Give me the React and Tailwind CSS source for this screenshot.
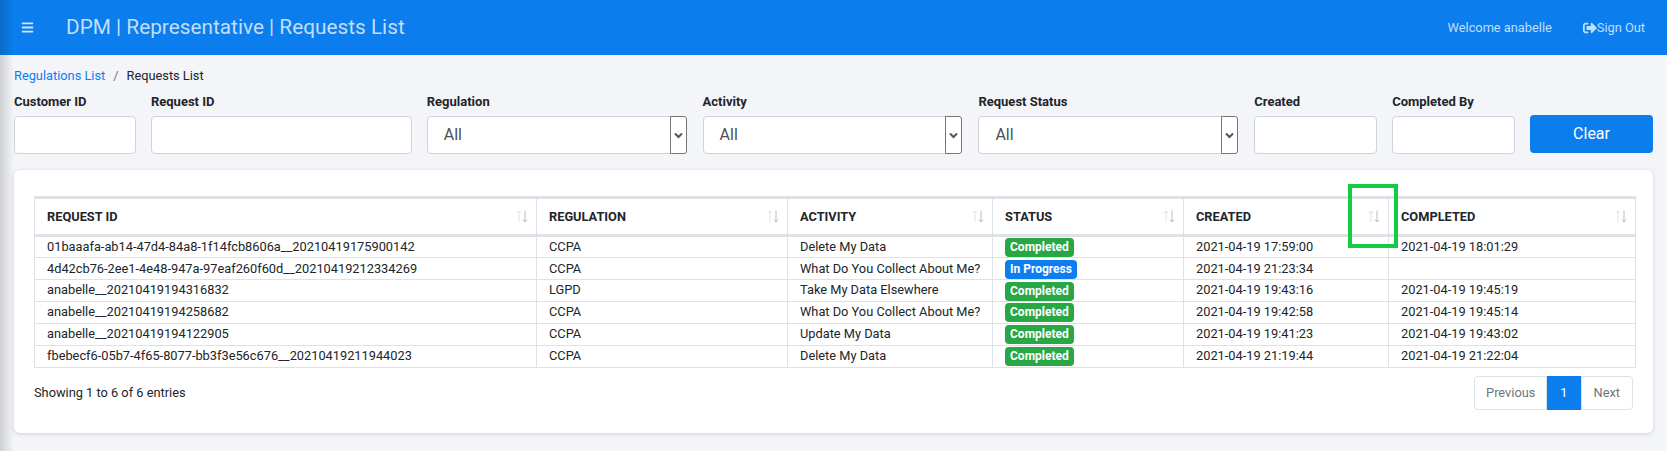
import React from 'react';
import { FaBars, FaSignOutAlt } from 'react-icons/fa';

const rows = [
  { id: '01baaafa-ab14-47d4-84a8-1f14fcb8606a__20210419175900142', reg: 'CCPA', activity: 'Delete My Data', status: 'Completed', created: '2021-04-19 17:59:00', completed: '2021-04-19 18:01:29' },
  { id: '4d42cb76-2ee1-4e48-947a-97eaf260f60d__20210419212334269', reg: 'CCPA', activity: 'What Do You Collect About Me?', status: 'In Progress', created: '2021-04-19 21:23:34', completed: '' },
  { id: 'anabelle__20210419194316832', reg: 'LGPD', activity: 'Take My Data Elsewhere', status: 'Completed', created: '2021-04-19 19:43:16', completed: '2021-04-19 19:45:19' },
  { id: 'anabelle__20210419194258682', reg: 'CCPA', activity: 'What Do You Collect About Me?', status: 'Completed', created: '2021-04-19 19:42:58', completed: '2021-04-19 19:45:14' },
  { id: 'anabelle__20210419194122905', reg: 'CCPA', activity: 'Update My Data', status: 'Completed', created: '2021-04-19 19:41:23', completed: '2021-04-19 19:43:02' },
  { id: 'fbebecf6-05b7-4f65-8077-bb3f3e56c676__20210419211944023', reg: 'CCPA', activity: 'Delete My Data', status: 'Completed', created: '2021-04-19 21:19:44', completed: '2021-04-19 21:22:04' },
];

const columns = [
  { label: 'REQUEST ID', width: 'w-[502px]' },
  { label: 'REGULATION', width: 'w-[251px]' },
  { label: 'ACTIVITY', width: 'w-[205px]' },
  { label: 'STATUS', width: 'w-[191px]' },
  { label: 'CREATED', width: 'w-[205px]' },
  { label: 'COMPLETED', width: 'w-[247px]' },
];

function SortArrows() {
  return (
    <svg width="12" height="13" viewBox="0 0 12 13" className="shrink-0" fill="none">
      <path d="M3 12.5V1M.8 3.4 3 1l2.2 2.4" stroke="#dde3ea" strokeWidth="1" />
      <path d="M9 .5V12M6.8 9.6 9 12l2.2-2.4" stroke="#b5bcc5" strokeWidth="1" />
    </svg>
  );
}

function Label({ children }) {
  return <label className="block h-[19px] text-[13px] leading-[19px] font-bold text-[#212529] mb-[5px]">{children}</label>;
}

function TextFilter({ label, width }) {
  return (
    <div className={width}>
      <Label>{label}</Label>
      <input className="block w-full h-[38px] bg-white border border-[#ced4da] rounded-[4px]" />
    </div>
  );
}

function SelectFilter({ label }) {
  return (
    <div className="w-[260px] mr-px">
      <Label>{label}</Label>
      <div className="flex items-stretch h-[38px] bg-white border border-[#ced4da] rounded-[4px]">
        <div className="flex-1 pl-[16px] text-[16px] leading-[36px] text-[#495057]">All</div>
        <div className="flex items-center justify-center w-[17px] border border-[#767676] rounded-r-[3px] -my-px -mr-px bg-white">
          <svg width="9" height="7" viewBox="0 0 9 7" fill="none">
            <path d="M1 1.5 4.5 5 8 1.5" stroke="#555" strokeWidth="2" />
          </svg>
        </div>
      </div>
    </div>
  );
}

function Badge({ status }) {
  const color = status === 'Completed' ? 'bg-[#28a745]' : 'bg-[#0d7df0]';
  return <span className={`inline-block h-[19px] px-[5px] rounded-[4px] text-[12px] leading-[19px] font-bold text-white align-middle ${color}`}>{status}</span>;
}

export default function App() {
  return (
    <div className="relative h-[451px] overflow-hidden bg-[#f4f5f9] text-[#212529] font-['Roboto',sans-serif]">
      {/* navbar */}
      <div className="flex items-center h-[55px] bg-[#0b7ded] pl-[21px] pr-[22px]">
        <FaBars className="text-white/80 text-[13px]" />
        <div className="ml-[32px] text-[20.8px] text-white/75">DPM | Representative | Requests List</div>
        <div className="ml-auto text-[12.8px] text-white/75">Welcome anabelle</div>
        <div className="flex items-center ml-[31px] text-[12.8px] text-white/75">
          <FaSignOutAlt className="text-[14px]" />
          Sign Out
        </div>
      </div>

      <div className="px-[14px]">
        {/* breadcrumb */}
        <div className="flex h-[21px] mt-[10px] text-[12.8px] leading-[21px]">
          <span className="text-[#0d7df0]">Regulations List</span>
          <span className="px-[8px] text-[#6c757d]">/</span>
          <span>Requests List</span>
        </div>

        {/* filters */}
        <div className="flex items-end gap-[15px] mt-[6px]">
          <TextFilter label="Customer ID" width="w-[122px]" />
          <TextFilter label="Request ID" width="w-[261px]" />
          <SelectFilter label="Regulation" />
          <SelectFilter label="Activity" />
          <SelectFilter label="Request Status" />
          <TextFilter label="Created" width="w-[123px]" />
          <TextFilter label="Completed By" width="w-[123px]" />
          <button className="w-[123px] h-[38px] bg-[#0b7ded] rounded-[4px] text-white text-[16px] mb-px">Clear</button>
        </div>

        {/* card */}
        <div className="mt-[16px] h-[263px] bg-white rounded-[6px] shadow-[0_1px_4px_rgba(0,0,0,0.15)] pl-[20px] pr-[18px] pt-[26px]">
          <table className="w-full table-fixed border-collapse text-[12.8px] text-[#212529]">
            <thead>
              <tr>
                {columns.map(c => (
                  <th key={c.label} className={`${c.width} h-[38px] px-[12px] border border-[#dee2e6] border-t-[3px] border-b-[3px] text-left font-bold`}>
                    <div className="flex items-center justify-between -mr-[4px]">
                      {c.label}
                      <SortArrows />
                    </div>
                  </th>
                ))}
              </tr>
            </thead>
            <tbody>
              {rows.map(r => (
                <tr key={r.id} className="h-[21.9px]">
                  <td className="px-[12px] py-0 border border-[#dee2e6] leading-[20px]">{r.id}</td>
                  <td className="px-[12px] py-0 border border-[#dee2e6] leading-[20px]">{r.reg}</td>
                  <td className="px-[12px] py-0 border border-[#dee2e6] leading-[20px] whitespace-nowrap">{r.activity}</td>
                  <td className="px-[12px] py-0 border border-[#dee2e6] leading-[20px]"><Badge status={r.status} /></td>
                  <td className="px-[12px] py-0 border border-[#dee2e6] leading-[20px]">{r.created}</td>
                  <td className="px-[12px] py-0 border border-[#dee2e6] leading-[20px]">{r.completed}</td>
                </tr>
              ))}
            </tbody>
          </table>

          {/* footer */}
          <div className="flex items-start justify-between mt-[8px]">
            <div className="pt-[7px] text-[12.8px]">Showing 1 to 6 of 6 entries</div>
            <div className="flex h-[34px] text-[12.8px] leading-[32px] mr-[2px]">
              <span className="px-[11px] bg-white border border-[#dee2e6] rounded-l-[4px] text-[#6c757d]">Previous</span>
              <span className="px-[12px] bg-[#0b7ded] border border-[#0b7ded] text-white">1</span>
              <span className="px-[12px] bg-white border border-[#dee2e6] rounded-r-[4px] text-[#6c757d]">Next</span>
            </div>
          </div>
        </div>
      </div>

      {/* sidebar shadow over the left edge */}
      <div className="absolute inset-y-0 left-0 w-[14px] bg-gradient-to-r from-black/15 to-transparent pointer-events-none" />
      {/* green annotation box */}
      <div className="absolute left-[1348px] top-[184px] w-[50px] h-[64px] border-[4px] border-[#12cc43] pointer-events-none" />
    </div>
  );
}
